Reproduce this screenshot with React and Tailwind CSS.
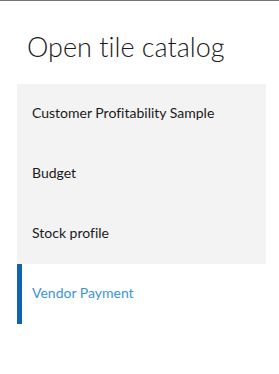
export default function App() {
  const items = ["Customer Profitability Sample", "Budget", "Stock profile"];
  return (
    <div className="w-[279px] h-[374px] bg-white border-t border-[#767676] font-['Lato','Noto_Sans',sans-serif] [font-variant-ligatures:none]">
      <div className="pl-[27px] pt-[30px] h-[83px] text-[27px] font-light leading-[32px] text-[#1a1a1a]">
        Open tile catalog
      </div>
      <div className="ml-[17px] w-[249px] bg-[#f3f3f3]">
        {items.map((t) => (
          <div key={t} className="h-[60px] flex items-center pl-[15px] pb-[3px] text-[14px] text-[#1a1a1a]">
            {t}
          </div>
        ))}
      </div>
      <div className="ml-[17px] w-[249px] h-[60px] flex items-center border-l-[5px] border-[#1063ac] pl-[10px] pb-[3px] text-[14px] text-[#3b94dc]">
        Vendor Payment
      </div>
    </div>
  );
}
